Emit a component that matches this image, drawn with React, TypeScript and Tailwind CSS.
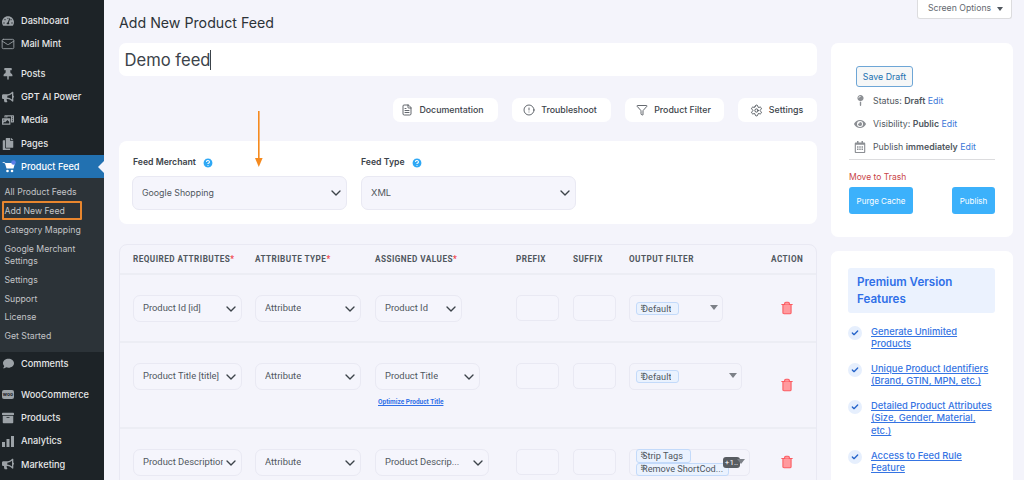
import React from "react";
import { FaTachometerAlt, FaThumbtack, FaBullhorn, FaCopy, FaComment, FaArchive, FaPhotoVideo, FaMapPin, FaEye, FaRegCalendarAlt } from "react-icons/fa";
import { FileText, CircleAlert, Funnel, Settings, ChevronDown, Trash2, Check, Mail, CircleHelp } from "lucide-react";

const Top = ({ icon, label, mt = "" }: { icon: React.ReactNode; label: string; mt?: string }) => (
  <div className={`flex h-[23.2px] items-center ${mt}`}>
    <span className="flex w-[21px] justify-center pr-[5px] text-[#9ca2a7]">{icon}</span>
    <span className="text-[9.2px] font-medium text-[#e6e7e8]">{label}</span>
  </div>
);

const Bars = () => (
  <svg width="12" height="11" viewBox="0 0 12 11" fill="#9ca2a7"><rect x="0" y="6" width="3" height="5" /><rect x="4.5" y="3" width="3" height="8" /><rect x="9" y="0" width="3" height="11" /></svg>
);

const Sel = ({ w, label, h = "h-[27px]", text = "text-[9.4px]", textW = "" }: { w: string; label: string; h?: string; text?: string; textW?: string }) => (
  <div className={`${w} ${h} flex items-center justify-between rounded-[7px] border border-[#e9e9f3] bg-[#f5f5fc] pl-[9px] pr-[2px]`}>
    <span className={`overflow-hidden whitespace-nowrap text-[#50575e] ${text} ${textW}`}>{label}</span>
    <ChevronDown size={16} strokeWidth={2} className="shrink-0 text-[#3c434a]" />
  </div>
);

const Tag = ({ w, label }: { w: string; label: string }) => (
  <div className={`${w} relative flex h-[13.5px] items-center whitespace-nowrap rounded-[3px] border border-[#c3dafa] bg-[#eaf2fe] pl-[5px] text-[9.2px] text-[#50575e]`}>
    <span className="absolute left-[3px] text-[8px] text-[#646970]">⠿</span>
    <span className="overflow-hidden">{label}</span>
  </div>
);

const Filter = ({ w, children, arrow = "" }: { w: string; children: React.ReactNode; arrow?: string }) => (
  <div className={`${w} relative flex h-[27px] items-center rounded-[5px] border border-[#e9e9f3] pl-[6px]`}>
    <div className="flex flex-col">{children}</div>
    <span className={`absolute top-[9px] h-0 w-0 border-x-[4px] border-t-[5px] border-x-transparent border-t-[#7c8087] ${arrow}`} />
  </div>
);

const Box = () => <div className="h-[26px] w-[43px] rounded-[5px] border border-[#e9e9f3] bg-[#f5f5fc]" />;

const Row = ({ h, a, b, c, f, trash = "mt-[6px]" }: { h: string; a: React.ReactNode; b: React.ReactNode; c: React.ReactNode; f: React.ReactNode; trash?: string }) => (
  <div className={`${h} grid grid-cols-[122px_120px_141px_57px_56px_142px_1fr] border-t-2 border-[#ecedf4] pl-[13px] pt-[20px]`}>
    <div>{a}</div>
    <div>{b}</div>
    <div>{c}</div>
    <Box />
    <Box />
    <div>{f}</div>
    <div className="flex items-start pl-[9px]">
      <Trash2 size={14} strokeWidth={1.8} className={`${trash} fill-[#ff9a9e] text-[#fb5a60]`} />
    </div>
  </div>
);

const Hd = ({ label, star = false }: { label: string; star?: boolean }) => (
  <div className="whitespace-nowrap text-[8.2px] font-bold tracking-[0.45px] text-[#50575e]">
    {label}
    {star && <span className="text-[#f0444a]">*</span>}
  </div>
);

const TopBtn = ({ icon, label, w, pr = "pr-[2px]" }: { icon: React.ReactNode; label: string; w: string; pr?: string }) => (
  <div className={`${w} ${pr} flex h-[24px] items-center justify-center gap-[6px] rounded-[7px] bg-white text-[8.8px] font-medium text-[#3c434a]`}>
    {icon}
    <span>{label}</span>
  </div>
);

const Feature = ({ children }: { children: React.ReactNode }) => (
  <div className="flex gap-[9px]">
    <span className="flex h-[14px] w-[14px] shrink-0 items-center justify-center rounded-full bg-[#e6effd]">
      <Check size={8} strokeWidth={4} className="text-[#2563c9]" />
    </span>
    <a className="whitespace-nowrap text-[9.4px] font-medium leading-[12.3px] text-[#3574e3] underline">{children}</a>
  </div>
);

const Meta = ({ icon, children }: { icon: React.ReactNode; children: React.ReactNode }) => (
  <div className="flex h-[23px] items-center text-[8.8px] text-[#50575e]">
    <span className="-ml-[2px] flex w-[26px] justify-center text-[#8c8f94]">{icon}</span>
    <span className="whitespace-nowrap">{children}</span>
  </div>
);

const Sub = ({ children }: { children: React.ReactNode }) => (
  <div className="pl-[4.5px] text-[8.7px] leading-[12.5px] text-[#c3c4c7]">{children}</div>
);

export default function App() {
  return (
    <div className="relative flex h-[480px] w-[1024px] overflow-hidden bg-[#f4f4fb] font-['Inter',sans-serif]">
      <aside className="w-[104px] shrink-0 bg-[#1d2327] pt-[9px]">
        <Top icon={<FaTachometerAlt size={12} />} label="Dashboard" />
        <Top icon={<Mail size={14} strokeWidth={1.5} />} label="Mail Mint" />
        <Top icon={<FaThumbtack size={12} />} label="Posts" mt="mt-[7px]" />
        <Top icon={<FaBullhorn size={12} />} label="GPT AI Power" />
        <Top icon={<FaPhotoVideo size={12} />} label="Media" />
        <Top icon={<FaCopy size={12} />} label="Pages" />
        <div className="relative flex h-[23px] items-center bg-[#2271b1]">
          <span className="flex w-[21px] justify-center pr-[4px]">
            <svg width="14" height="13" viewBox="0 0 14 13">
              <path d="M0 2h2l1.5 1H13l-1.5 5.5H4.5L3 3.5z" fill="#fff" />
              <circle cx="5.5" cy="11" r="1.3" fill="#fff" />
              <circle cx="10" cy="11" r="1.3" fill="#fff" />
              <circle cx="11.5" cy="2.5" r="2.3" fill="#5b7fe8" />
            </svg>
          </span>
          <span className="text-[9.2px] font-medium text-white">Product Feed</span>
          <span className="absolute right-0 top-[6px] h-0 w-0 border-y-[6px] border-r-[6px] border-y-transparent border-r-[#f4f4fb]" />
        </div>
        <div className="flex h-[174px] flex-col bg-[#2c3338] pt-[8px]">
          <div className="flex flex-col gap-[6.3px]">
            <Sub>All Product Feeds</Sub>
            <Sub>Add New Feed</Sub>
            <Sub>Category Mapping</Sub>
            <Sub>Google Merchant<br />Settings</Sub>
            <Sub>Settings</Sub>
            <Sub>Support</Sub>
            <Sub>License</Sub>
            <Sub>Get Started</Sub>
          </div>
        </div>
        <Top icon={<FaComment size={11} />} label="Comments" />
        <Top icon={<span className="rounded-[2px] bg-[#9ca2a7] px-[1px] text-[5px] font-bold leading-[9px] text-[#1d2327]">woo</span>} label="WooCommerce" mt="mt-[8px]" />
        <Top icon={<FaArchive size={12} />} label="Products" />
        <Top icon={<Bars />} label="Analytics" />
        <Top icon={<FaBullhorn size={12} />} label="Marketing" />
      </aside>

      <main className="flex min-w-0 flex-1 gap-[14px] pl-[15px]">
        <section className="w-[698px] shrink-0">
          <h1 className="mt-[13px] h-[19px] text-[14.2px] font-normal leading-[19px] text-[#2c3338]">Add New Product Feed</h1>
          <div className="mt-[11px] flex h-[33px] items-center rounded-[7px] bg-white pl-[5.5px] pt-[1px] text-[16.6px] text-[#3c434a]">
            <span>Demo feed</span>
            <span className="h-[20px] w-px bg-[#3c434a]" />
          </div>
          <div className="mt-[22px] flex justify-end gap-[14px]">
            <TopBtn w="w-[105px]" pr="pr-[6px]" label="Documentation" icon={<FileText size={12} strokeWidth={1.6} />} />
            <TopBtn w="w-[99px]" pr="pr-[3px]" label="Troubleshoot" icon={<CircleAlert size={12} strokeWidth={1.6} />} />
            <TopBtn w="w-[99px]" pr="pr-[2px]" label="Product Filter" icon={<Funnel size={12} strokeWidth={1.6} />} />
            <TopBtn w="w-[79px]" pr="pr-[2px]" label="Settings" icon={<Settings size={13} strokeWidth={1.6} />} />
          </div>
          <div className="mt-[19px] flex h-[83px] gap-[14px] rounded-[8px] bg-white pl-[13px] pt-[16px]">
            <div className="w-[215px]">
              <div className="flex h-[12px] items-center gap-[6px] pl-[1px] text-[8.7px] font-semibold text-[#3c434a]">
                Feed Merchant
                <CircleHelp size={12} strokeWidth={2.2} className="fill-[#2ea8f5] text-white" />
              </div>
              <div className="mt-[7px]"><Sel w="w-[215px]" h="h-[34px]" text="text-[8.8px]" label="Google Shopping" /></div>
            </div>
            <div className="w-[215px]">
              <div className="flex h-[12px] items-center gap-[6px] text-[8.7px] font-semibold text-[#3c434a]">
                Feed Type
                <CircleHelp size={12} strokeWidth={2.2} className="fill-[#2ea8f5] text-white" />
              </div>
              <div className="mt-[7px]"><Sel w="w-[215px]" h="h-[34px]" text="text-[9.4px]" label="XML" /></div>
            </div>
          </div>
          <div className="mt-[20px] rounded-t-[8px] border border-[#e9e9f3] font-['Roboto',sans-serif]">
            <div className="grid h-[28px] grid-cols-[122px_120px_141px_57px_56px_142px_1fr] items-center pl-[13px]">
              <Hd label="REQUIRED ATTRIBUTES" star />
              <Hd label="ATTRIBUTE TYPE" star />
              <Hd label="ASSIGNED VALUES" star />
              <Hd label="PREFIX" />
              <Hd label="SUFFIX" />
              <Hd label="OUTPUT FILTER" />
              <Hd label="ACTION" />
            </div>
            <Row
              h="h-[68px]"
              a={<Sel w="w-[109px]" label="Product Id [id]" />}
              b={<Sel w="w-[106px]" label="Attribute" />}
              c={<Sel w="w-[87px]" label="Product Id" />}
              f={<Filter w="w-[94px]" arrow="right-[4px]"><Tag w="w-[43px]" label="Default" /></Filter>}
            />
            <Row
              h="h-[86px]"
              trash="mt-[15px]"
              a={<Sel w="w-[109px]" label="Product Title [title]" />}
              b={<Sel w="w-[106px]" label="Attribute" />}
              c={
                <div>
                  <Sel w="w-[105px]" label="Product Title" />
                  <a className="ml-[3px] mt-[8px] block text-[6.5px] font-bold text-[#2f6fe8] underline">Optimize Product Title</a>
                </div>
              }
              f={<Filter w="w-[113px]" arrow="right-[4px]"><Tag w="w-[43px]" label="Default" /></Filter>}
            />
            <Row
              h="h-[60px]"
              a={<Sel w="w-[109px]" label="Product Description" textW="w-[82px]" />}
              b={<Sel w="w-[106px]" label="Attribute" />}
              c={<Sel w="w-[114px]" label="Product Descrip..." />}
              f={
                <Filter w="w-[121px]" arrow="right-[4px]">
                  <Tag w="w-[55px]" label="Strip Tags" />
                  <Tag w="w-[93px]" label="Remove ShortCod..." />
                  <span className="absolute left-[93px] top-[7px] flex h-[11px] w-[17px] items-center justify-center rounded-[3px] bg-[#585c61] text-[8px] text-white">+1..</span>
                </Filter>
              }
            />
          </div>
        </section>

        <section className="w-[182px] shrink-0">
          <div className="ml-[86px] flex h-[19px] w-[95px] items-center justify-center gap-[6px] rounded-b-[3px] border border-t-0 border-[#dcdcde] bg-white pl-[2px] text-[8.7px] text-[#646970]">
            Screen Options
            <span className="h-0 w-0 border-x-[3px] border-t-[4px] border-x-transparent border-t-[#50575e]" />
          </div>
          <div className="mt-[24px] h-[194px] rounded-[7px] bg-white pl-[18px] pr-[18px] pt-[23px]">
            <div className="ml-[7px] flex h-[21px] w-[57px] items-center justify-center rounded-[3px] border border-[#6ea6d6] bg-[#f6f7f7] text-[8.8px] text-[#2271b1]">Save Draft</div>
            <div className="mt-[2px]">
              <Meta icon={<FaMapPin size={11} />}>Status: <b className="font-semibold">Draft</b> <span className="text-[#3b78d8]">Edit</span></Meta>
              <Meta icon={<FaEye size={12} />}>Visibility: <b className="font-semibold">Public</b> <span className="text-[#3b78d8]">Edit</span></Meta>
              <Meta icon={<FaRegCalendarAlt size={12} />}>Publish <b className="font-semibold">immediately</b> <span className="text-[#3b78d8]">Edit</span></Meta>
            </div>
            <div className="mt-[1px] border-t border-[#dcdcde]" />
            <div className="mt-[11px] text-[8.5px] leading-[12px] text-[#c94548]">Move to Trash</div>
            <div className="mt-[4px] flex justify-between">
              <div className="flex h-[27px] w-[64px] items-center justify-center rounded-[3px] bg-[#3cb1fb] text-[8px] text-white">Purge Cache</div>
              <div className="flex h-[27px] w-[43px] items-center justify-center rounded-[3px] bg-[#3cb1fb] text-[8px] text-white">Publish</div>
            </div>
          </div>
          <div className="mt-[14px] h-[300px] rounded-[7px] bg-white pl-[17px] pr-[18px] pt-[17px]">
            <div className="flex h-[45px] flex-col justify-center rounded-[3px] bg-[#ebf2fe] pl-[9px] text-[11.6px] font-semibold leading-[17px] text-[#2f6fe8]">
              <div>Premium Version</div>
              <div>Features</div>
            </div>
            <div className="mt-[13px] flex flex-col gap-[12.5px]">
              <Feature>Generate Unlimited<br />Products</Feature>
              <Feature>Unique Product Identifiers<br />(Brand, GTIN, MPN, etc.)</Feature>
              <Feature>Detailed Product Attributes<br />(Size, Gender, Material,<br />etc.)</Feature>
              <Feature>Access to Feed Rule<br />Feature</Feature>
            </div>
          </div>
        </section>
      </main>

      <div className="absolute left-[2px] top-[201px] h-[19px] w-[80px] rounded-[1px] border-2 border-[#e8862e]" />
      <svg className="absolute left-[252px] top-[110px]" width="14" height="60" viewBox="0 0 14 60">
        <rect x="6" y="1" width="1.6" height="48" fill="#f58a1f" />
        <path d="M3 48h7.6l-3.8 9z" fill="#f58a1f" />
      </svg>
    </div>
  );
}
